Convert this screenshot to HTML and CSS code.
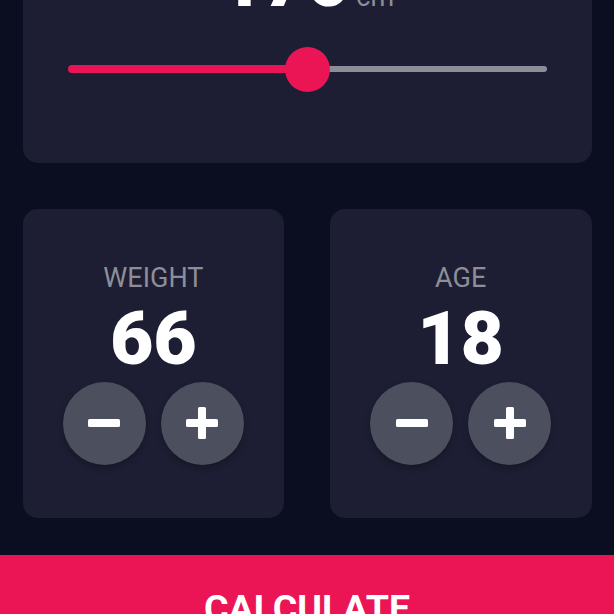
FILE: index.html
```html
<!DOCTYPE html>
<html lang="en">
<head>
<meta charset="utf-8">
<title>BMI Calculator</title>
<link rel="stylesheet" href="styles.css">
</head>
<body>
<main class="app">
  <section class="card card-height">
    <div class="label">HEIGHT</div>
    <div class="height-row">
      <span class="number">170</span>
      <span class="unit">cm</span>
    </div>
    <div class="slider">
      <div class="track">
        <div class="track-active"></div>
        <div class="track-inactive"></div>
      </div>
      <div class="thumb"></div>
    </div>
  </section>

  <div class="row">
    <section class="card card-stat">
      <div class="label">WEIGHT</div>
      <div class="number">66</div>
      <div class="buttons">
        <button class="round-btn" aria-label="decrease">
          <svg width="32" height="32" viewBox="0 0 32 32"><rect x="0" y="12" width="32" height="8" rx="1.5" fill="#fff"/></svg>
        </button>
        <button class="round-btn" aria-label="increase">
          <svg width="32" height="32" viewBox="0 0 32 32"><rect x="0" y="12" width="32" height="8" rx="1.5" fill="#fff"/><rect x="12" y="0" width="8" height="32" rx="1.5" fill="#fff"/></svg>
        </button>
      </div>
    </section>
    <section class="card card-stat">
      <div class="label">AGE</div>
      <div class="number">18</div>
      <div class="buttons">
        <button class="round-btn" aria-label="decrease">
          <svg width="32" height="32" viewBox="0 0 32 32"><rect x="0" y="12" width="32" height="8" rx="1.5" fill="#fff"/></svg>
        </button>
        <button class="round-btn" aria-label="increase">
          <svg width="32" height="32" viewBox="0 0 32 32"><rect x="0" y="12" width="32" height="8" rx="1.5" fill="#fff"/><rect x="12" y="0" width="8" height="32" rx="1.5" fill="#fff"/></svg>
        </button>
      </div>
    </section>
  </div>

  <button class="calculate">CALCULATE</button>
</main>
</body>
</html>
```

FILE: styles.css
```css
* { box-sizing: border-box; }

html, body {
  margin: 0;
  padding: 0;
  background: #0b0e20;
  height: 614px;
  overflow: hidden;
}

body {
  font-family: Roboto, "Noto Sans", sans-serif;
  color: #fff;
}

.app {
  display: flex;
  flex-direction: column;
}

.card {
  background: #1d1e33;
  border-radius: 15px;
}

.card-height {
  margin: -137px 22.5px 0;
  height: 300px;
  display: flex;
  flex-direction: column;
  align-items: stretch;
  justify-content: flex-end;
  padding-bottom: 71.5px;
}

.label {
  font-size: 27px;
  color: #8d8e98;
  text-align: center;
  line-height: normal;
}

.number {
  font-size: 75px;
  font-weight: 900;
  color: #fff;
  line-height: normal;
}

.height-row {
  display: flex;
  justify-content: center;
  align-items: baseline;
  gap: 6px;
  margin-bottom: 29px;
}

.height-row .number {
  line-height: 75px;
}

.unit {
  font-size: 27px;
  color: #8d8e98;
}

.slider {
  position: relative;
  height: 45px;
  margin: 0 45px;
}

.track {
  display: flex;
  align-items: center;
  height: 45px;
}

.track-active {
  flex: 1;
  height: 8px;
  background: #eb1555;
  border-radius: 4px 0 0 4px;
}

.track-inactive {
  flex: 1;
  height: 6px;
  background: #8d8e98;
  border-radius: 0 3px 3px 0;
}

.thumb {
  position: absolute;
  left: 50%;
  top: 0;
  width: 45px;
  height: 45px;
  margin-left: -22.5px;
  border-radius: 50%;
  background: #eb1555;
}

.row {
  display: grid;
  grid-template-columns: 1fr 1fr;
  gap: 45.5px;
  padding: 0 22.5px;
  margin-top: 45.5px;
}

.card-stat {
  height: 309px;
  display: flex;
  flex-direction: column;
  align-items: center;
  justify-content: center;
}

.buttons {
  display: flex;
  gap: 15px;
}

.round-btn {
  width: 83px;
  height: 83px;
  border: none;
  padding: 0;
  border-radius: 50%;
  background: #4c4f5e;
  display: flex;
  align-items: center;
  justify-content: center;
  box-shadow: 0 3px 6px rgba(0, 0, 0, 0.25);
}

.round-btn svg {
  display: block;
}

.calculate {
  margin-top: 37.5px;
  height: 120px;
  width: 100%;
  border: none;
  background: #eb1555;
  color: #fff;
  font-family: Roboto, "Noto Sans", sans-serif;
  font-size: 37.5px;
  font-weight: 700;
  line-height: normal;
  padding: 31px 0 0;
  display: flex;
  justify-content: center;
  align-items: flex-start;
}
```
